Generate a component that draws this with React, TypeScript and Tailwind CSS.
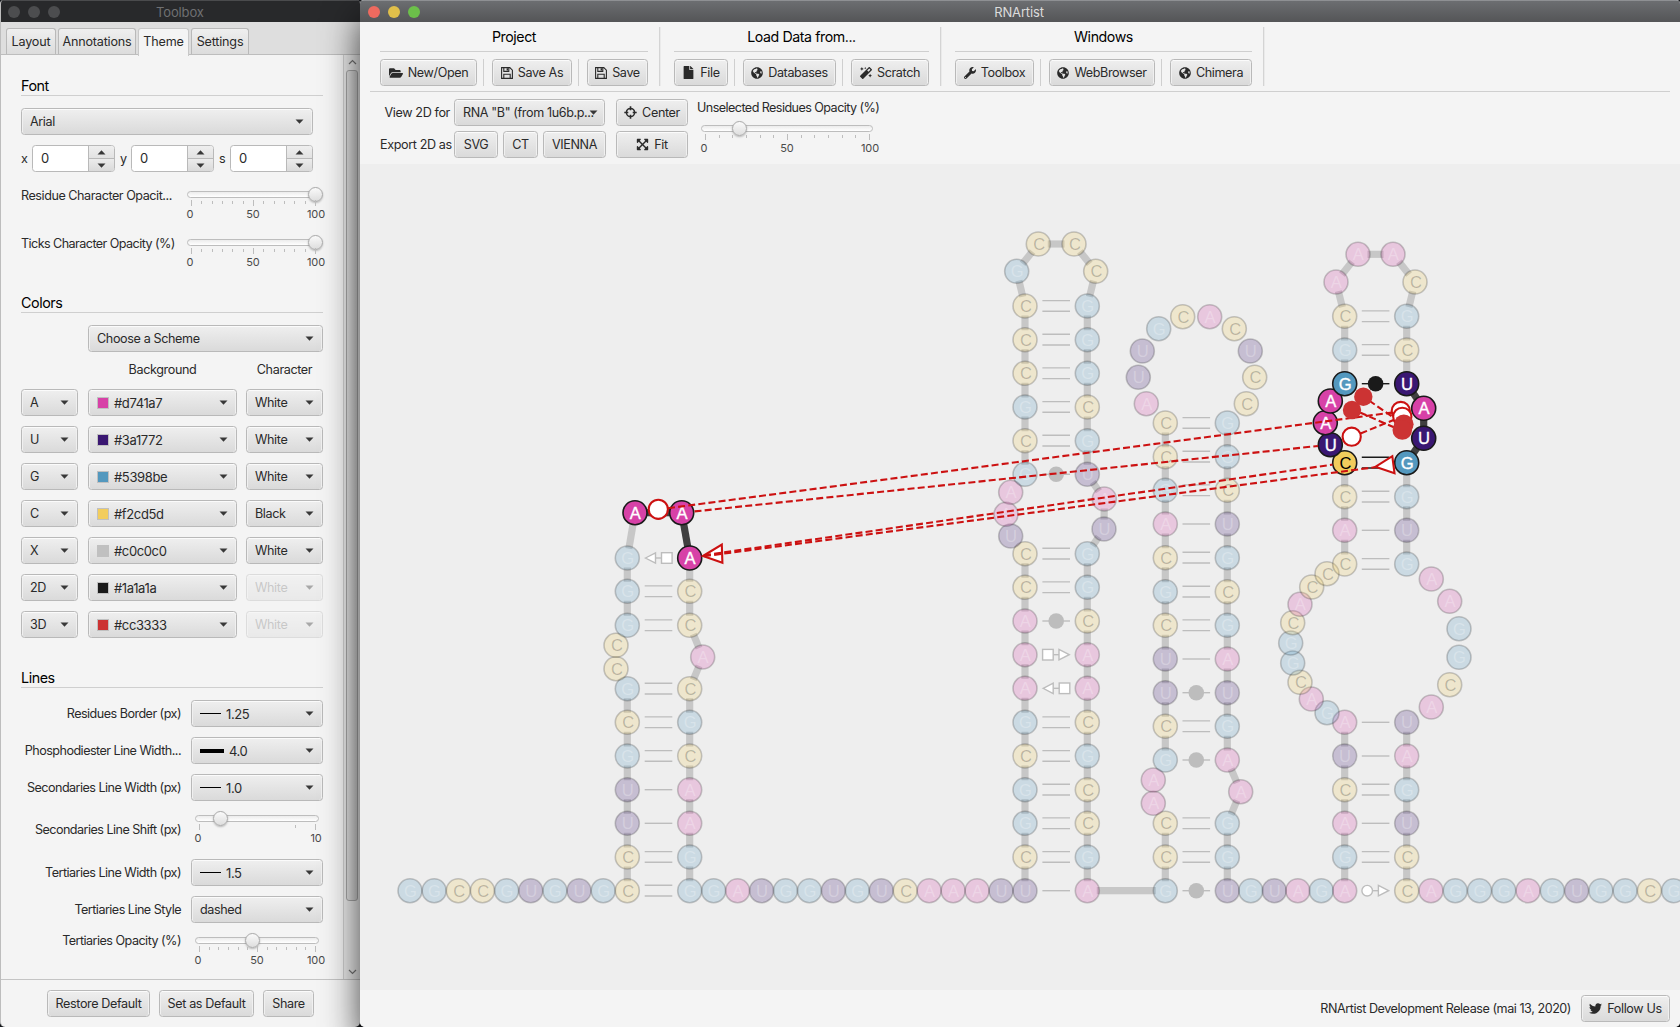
import React from "react";
import {
  FaFolderOpen,
  FaFile,
  FaGlobeAmericas,
  FaMagic,
  FaWrench,
  FaTwitter,
  FaExpandArrowsAlt,
} from "react-icons/fa";

/* ---------- shared controls ---------- */

const FACE =
  "rounded-[3.5px] border border-[#b9b9b9] bg-gradient-to-b from-[#efefef] to-[#dadada] shadow-[inset_0_1px_0_#fbfbfb,inset_1px_0_0_#f0f0f0,inset_-1px_0_0_#f0f0f0]";

function Button({ w, icon, children }: { w: number; icon?: React.ReactNode; children: React.ReactNode }) {
  return (
    <button className={`${FACE} flex h-[27px] shrink-0 items-center justify-center gap-[5px] whitespace-nowrap`} style={{ width: w }}>
      {icon}
      <span>{children}</span>
    </button>
  );
}

function Caret({ up = false }: { up?: boolean }) {
  return (
    <svg width="9" height="5" viewBox="0 0 9 5" className="shrink-0">
      <path d={up ? "M0.5 4.5 4.5 0.3 8.5 4.5z" : "M0.5 0.5h8L4.5 4.7z"} fill="#383838" />
    </svg>
  );
}

function Combo({ w, disabled = false, children }: { w: number; disabled?: boolean; children: React.ReactNode }) {
  return (
    <div
      className={`${FACE} flex h-[27px] shrink-0 items-center justify-between pr-[8px] pl-[8px] ${disabled ? "opacity-40" : ""}`}
      style={{ width: w }}
    >
      <span className={`flex items-center whitespace-nowrap ${disabled ? "opacity-50" : ""}`}>{children}</span>
      <Caret />
    </div>
  );
}

type Tick = [number, boolean];
const TICKS: Tick[] = [0, 1, 2, 3, 4, 5, 6, 7, 8, 9, 10, 11, 12].map((i) => [i / 12, i % 6 === 0]);

function Slider({ w, at, ticks, labels }: { w: number; at: number; ticks: Tick[]; labels: string[] }) {
  return (
    <div className="relative h-[30px] shrink-0" style={{ width: w }}>
      <div className="h-[7px] rounded-full border border-[#bdbdbd] bg-gradient-to-b from-[#ececec] to-white" />
      <div
        className="absolute -top-[4px] size-[15px] rounded-full border border-[#a9a9a9] bg-gradient-to-b from-[#fafafa] to-[#dedede] shadow-[0_1px_2px_rgba(0,0,0,0.25)]"
        style={{ left: at - 7.5 }}
      />
      <div className="relative mx-[4px] mt-[2px] h-[6px]">
        {ticks.map(([f, major], i) => (
          <span
            key={i}
            className={`absolute w-px bg-[#bdbdbd] ${major ? "top-0 h-[6px]" : "top-[1px] h-[3px]"}`}
            style={{ left: `${f * 100}%` }}
          />
        ))}
      </div>
      <div className="mx-[3px] mt-[1px] flex justify-between text-[11px] leading-[15px] tracking-[-0.01em] text-[#4a4a4a]">
        {labels.map((l) => (
          <span key={l} className="flex w-0 justify-center">
            {l}
          </span>
        ))}
      </div>
    </div>
  );
}

function Heading({ children }: { children: React.ReactNode }) {
  return (
    <div className="h-[19px] w-[302px] border-b border-[#cfcfcf] text-[14.3px] leading-[17px] tracking-[-0.03em] text-black">
      {children}
    </div>
  );
}

/* ---------- toolbox window ---------- */

function Spinner({ label, labelW }: { label: string; labelW: string }) {
  return (
    <div className="flex items-center">
      <span className={labelW}>{label}</span>
      <div className="flex h-[27px] w-[83px] overflow-hidden rounded-[3.5px] border border-[#b9b9b9] bg-white">
        <span className="flex-1 pl-[8px] text-[13px] leading-[25px]">0</span>
        <div className="flex w-[26px] flex-col border-l border-[#b9b9b9]">
          <div className="flex flex-1 items-center justify-center border-b border-[#b9b9b9] bg-gradient-to-b from-[#efefef] to-[#e2e2e2]">
            <Caret up />
          </div>
          <div className="flex flex-1 items-center justify-center bg-gradient-to-b from-[#ececec] to-[#dadada]">
            <Caret />
          </div>
        </div>
      </div>
    </div>
  );
}

const PALETTE = [
  { key: "A", hex: "#d741a7", char: "White" },
  { key: "U", hex: "#3a1772", char: "White" },
  { key: "G", hex: "#5398be", char: "White" },
  { key: "C", hex: "#f2cd5d", char: "Black" },
  { key: "X", hex: "#c0c0c0", char: "White" },
  { key: "2D", hex: "#1a1a1a", char: "White", off: true },
  { key: "3D", hex: "#cc3333", char: "White", off: true },
];

function LineRow({ label, children }: { label: string; children: React.ReactNode }) {
  return (
    <div className="flex items-center gap-[10px]">
      <span className="w-[160px] text-right tracking-[-0.042em] whitespace-nowrap">{label}</span>
      <Combo w={132}>{children}</Combo>
    </div>
  );
}

function Stroke({ w, h }: { w: number; h: number }) {
  return <span className="mr-[5px] inline-block bg-black" style={{ width: w, height: h }} />;
}

function Tab({ w, active = false, children }: { w: number; active?: boolean; children: React.ReactNode }) {
  return (
    <div
      className={`flex items-center justify-center rounded-t-[3px] border border-b-0 ${
        active ? "h-[28px] border-[#c8c8c8] bg-[#f4f4f4]" : "h-[26px] border-[#b9b9b9] bg-gradient-to-b from-[#efefef] to-[#dcdcdc]"
      }`}
      style={{ width: w }}
    >
      <span className={active ? "-mt-[1px] tracking-[-0.015em]" : "tracking-[-0.015em]"}>{children}</span>
    </div>
  );
}

function Toolbox() {
  return (
    <aside className="flex w-[360px] shrink-0 flex-col overflow-hidden rounded-t-[4px] rounded-b-[5px] border-l border-[#bdbdbd] bg-[#f4f4f4]">
      <div className="-ml-px flex h-[22px] shrink-0 items-center border-t border-[#4a4b4d] bg-[#28292b] pl-[8px]">
        <div className="flex gap-[8px]">
          <i className="size-[12px] rounded-full bg-[#4c4d4f]" />
          <i className="size-[12px] rounded-full bg-[#4c4d4f]" />
          <i className="size-[12px] rounded-full bg-[#4c4d4f]" />
        </div>
        <span className="ml-[96px] text-[13px] tracking-[-0.01em] text-[#6f7072]">Toolbox</span>
      </div>
      <div className="flex h-[33px] shrink-0 items-start gap-[2px] border-b border-[#bdbdbd] bg-[#dedede] pt-[6px] pl-[5px]">
        <Tab w={50}>Layout</Tab>
        <Tab w={78}>Annotations</Tab>
        <Tab w={51} active>
          Theme
        </Tab>
        <Tab w={58}>Settings</Tab>
      </div>

      <div className="flex min-h-0 flex-1">
        <div className="flex w-[342px] flex-col pt-[22px] pl-[20px]">
          <Heading>Font</Heading>
          <div className="mt-[12px]">
            <Combo w={292}>Arial</Combo>
          </div>
          <div className="mt-[10px] flex">
            <Spinner label="x" labelW="w-[11px]" />
            <Spinner label="y" labelW="w-[16px] pl-[5px]" />
            <Spinner label="s" labelW="w-[16px] pl-[5px]" />
          </div>
          <div className="mt-[19px] flex h-[48px]">
            <span className="-mt-[4px] w-[166px] leading-[18px] tracking-[-0.036em]">Residue Character Opacit...</span>
            <Slider w={132} at={128.5} ticks={TICKS} labels={["0", "50", "100"]} />
          </div>
          <div className="flex h-[48px]">
            <span className="-mt-[4px] w-[166px] leading-[18px] tracking-[-0.045em]">Ticks Character Opacity (%)</span>
            <Slider w={132} at={128.5} ticks={TICKS} labels={["0", "50", "100"]} />
          </div>

          <div className="mt-[7px]">
            <Heading>Colors</Heading>
          </div>
          <div className="mt-[12px] pl-[67px]">
            <Combo w={235}>Choose a Scheme</Combo>
          </div>
          <div className="mt-[9px] flex h-[18px] items-center pl-[67px]">
            <span className="w-[149px] text-center">Background</span>
            <span className="ml-[9px] w-[77px] text-center">Character</span>
          </div>
          <div className="mt-[10px] flex flex-col gap-[10px]">
            {PALETTE.map((p) => (
              <div key={p.key} className="flex">
                <Combo w={57}>{p.key}</Combo>
                <div className="ml-[10px]">
                  <Combo w={149}>
                    <i className="mr-[5px] size-[12px] border border-[#c0c0c0]" style={{ background: p.hex }} />
                    <span className="text-[13px]">{p.hex}</span>
                  </Combo>
                </div>
                <div className="ml-[9px]">
                  <Combo w={77} disabled={p.off}>
                    {p.char}
                  </Combo>
                </div>
              </div>
            ))}
          </div>

          <div className="mt-[31px]">
            <Heading>Lines</Heading>
          </div>
          <div className="mt-[12px] flex flex-col gap-[10px]">
            <LineRow label="Residues Border (px)">
              <Stroke w={21} h={1.25} />
              <span className="text-[13px]">1.25</span>
            </LineRow>
            <LineRow label="Phosphodiester Line Width...">
              <Stroke w={24} h={4} />
              <span className="text-[13px]">4.0</span>
            </LineRow>
            <LineRow label="Secondaries Line Width (px)">
              <Stroke w={21} h={1} />
              <span className="text-[13px]">1.0</span>
            </LineRow>
          </div>
          <div className="mt-[14px] flex h-[44px]">
            <span className="mt-[6px] w-[160px] text-right tracking-[-0.042em]">Secondaries Line Shift (px)</span>
            <div className="ml-[14px]">
              <Slider w={124} at={25.5} ticks={[[0, true], [0.83, false], [1, true]]} labels={["0", "10"]} />
            </div>
          </div>
          <div className="flex flex-col gap-[10px]">
            <LineRow label="Tertiaries Line Width (px)">
              <Stroke w={21} h={1.25} />
              <span className="text-[13px]">1.5</span>
            </LineRow>
            <LineRow label="Tertiaries Line Style">dashed</LineRow>
          </div>
          <div className="mt-[14px] flex">
            <span className="-mt-[5px] w-[160px] text-right tracking-[-0.042em]">Tertiaries Opacity (%)</span>
            <div className="ml-[14px]">
              <Slider w={124} at={57.5} ticks={TICKS} labels={["0", "50", "100"]} />
            </div>
          </div>
        </div>
        <div className="flex w-[17px] flex-col items-center border-l border-[#cfcfcf] bg-[#ececec]">
          <svg width="9" height="15" viewBox="0 0 9 15" fill="none" stroke="#777" strokeWidth="1.2">
            <path d="M1 9 4.5 5.5 8 9" />
          </svg>
          <div className="h-[831px] w-[12px] rounded-[3px] border border-[#a8a8a8] bg-gradient-to-r from-[#e4e4e4] to-[#cfcfcf]" />
          <div className="flex-1" />
          <svg width="9" height="15" viewBox="0 0 9 15" fill="none" stroke="#777" strokeWidth="1.2">
            <path d="M1 6 4.5 9.5 8 6" />
          </svg>
        </div>
      </div>

      <div className="flex h-[48px] shrink-0 gap-[9px] border-t border-[#c4c4c4] pt-[10px] pl-[46px]">
        <Button w={103}>Restore Default</Button>
        <Button w={95}>Set as Default</Button>
        <Button w={51}>Share</Button>
      </div>
    </aside>
  );
}

/* ---------- toolbar ---------- */

function Floppy() {
  return (
    <svg width="12" height="12" viewBox="0 0 12 12" fill="none" stroke="#2b2b2b" strokeWidth="1.1">
      <path d="M0.6 0.6h8.2l2.6 2.6v8.2H0.6z" />
      <path d="M2.8 11.2V7.2h6.4v4" />
      <path d="M2.8 0.8v3.6h5V0.8" />
      <path d="M5.6 1.2h1.4v2.2H5.6z" fill="#2b2b2b" stroke="none" />
    </svg>
  );
}

function Crosshair() {
  return (
    <svg width="13" height="13" viewBox="0 0 13 13" fill="none" stroke="#2b2b2b" strokeWidth="1.5">
      <circle cx="6.5" cy="6.5" r="4.1" />
      <path d="M6.5 0.3v4M6.5 8.7v4M0.3 6.5h4M8.7 6.5h4" strokeWidth="1.6" />
    </svg>
  );
}

function Sep() {
  return <i className="mr-[8px] ml-[6px] h-[27px] w-px bg-[#cfcfcf]" />;
}

function Group({ w, title, children }: { w: number; title: string; children: React.ReactNode }) {
  return (
    <div className="shrink-0" style={{ width: w }}>
      <div className="h-[25px] border-b border-[#cfcfcf] text-center text-[14.2px] leading-[20px] tracking-[-0.03em] text-black">
        {title}
      </div>
      <div className="mt-[7px] flex">{children}</div>
    </div>
  );
}

function GroupSep() {
  return <i className="mr-[13px] ml-[11px] h-[59px] w-[2px] shrink-0 border-l border-[#d4d4d4] bg-[#eaeaea]" />;
}

function Toolbar() {
  return (
    <div className="h-[142px] shrink-0 bg-[#f4f4f4]">
      <div className="mx-[10px] flex h-[70px] border-b border-[#cfcfcf] pt-[5px] pl-[10px]">
        <Group w={268} title="Project">
          <Button w={97} icon={<FaFolderOpen size={14} />}>New/Open</Button>
          <Sep />
          <Button w={80} icon={<Floppy />}>Save As</Button>
          <Sep />
          <Button w={61} icon={<Floppy />}>Save</Button>
        </Group>
        <GroupSep />
        <Group w={255} title="Load Data from...">
          <Button w={54} icon={<FaFile size={13} />}>File</Button>
          <Sep />
          <Button w={93} icon={<FaGlobeAmericas size={12} />}>Databases</Button>
          <Sep />
          <Button w={78} icon={<FaMagic size={12} />}>Scratch</Button>
        </Group>
        <GroupSep />
        <Group w={297} title="Windows">
          <Button w={79} icon={<FaWrench size={12} />}>Toolbox</Button>
          <Sep />
          <Button w={106} icon={<FaGlobeAmericas size={12} />}>WebBrowser</Button>
          <Sep />
          <Button w={82} icon={<FaGlobeAmericas size={12} />}>Chimera</Button>
        </Group>
        <GroupSep />
      </div>
      <div className="flex pt-[7px] pl-[20px]">
        <div className="flex flex-col gap-[5px]">
          <div className="flex items-center gap-[4px]">
            <span className="w-[70px] text-right whitespace-nowrap">View 2D for</span>
            <div className={`${FACE} flex h-[27px] w-[151px] items-center pl-[8px]`}>
              <span className="w-[131px] whitespace-nowrap">RNA "B" (from 1u6b.p...</span>
              <span className="-ml-[5px]">
                <Caret />
              </span>
            </div>
          </div>
          <div className="flex items-center">
            <span className="mr-[4px] w-[70px] text-right whitespace-nowrap">Export 2D as</span>
            <div className="flex gap-[5px]">
              <Button w={44}>SVG</Button>
              <Button w={35}>CT</Button>
              <Button w={63}>VIENNA</Button>
            </div>
          </div>
        </div>
        <div className="ml-[10px] flex flex-col gap-[5px]">
          <Button w={72} icon={<Crosshair />}>Center</Button>
          <Button w={72} icon={<FaExpandArrowsAlt size={13} />}>Fit</Button>
        </div>
        <div className="ml-[9px]">
          <div className="h-[18px] leading-[18px] tracking-[-0.045em] whitespace-nowrap">Unselected Residues Opacity (%)</div>
          <div className="mt-[8px] ml-[4px]">
            <Slider w={172} at={38.5} ticks={TICKS} labels={["0", "50", "100"]} />
          </div>
        </div>
      </div>
    </div>
  );
}

/* ---------- RNA secondary structure ---------- */

type Residue = { b: string; x: number; y: number; sel?: boolean };

const FILL: Record<string, string> = { A: "#d741a7", U: "#3a1772", G: "#5398be", C: "#f2cd5d" };
const FADE = 0.22;
const BASE = 890.7;

/* "G 10 20" = base, x, y; a trailing * marks a selected residue */
function parse(src: string): Residue[] {
  return src
    .trim()
    .split(/\s*;\s*/)
    .filter(Boolean)
    .map((s) => {
      const [b, x, y, sel] = s.split(" ");
      return { b, x: +x, y: +y, sel: sel === "*" };
    });
}

function column(x: number, bases: string, ys: number[]): Residue[] {
  return ys.map((y, i) => ({ b: bases[i], x, y }));
}

function row(x0: number, pitch: number, bases: string): Residue[] {
  return bases.split("").map((b, i) => ({ b, x: x0 + pitch * i, y: BASE }));
}

const up = (a: number[]) => [...a].reverse();

const CHAIN: Residue[] = [
  ...row(410, 24.15, "GGCCGUGUG"),
  ...column(627.3, "CCUUGCG", [BASE, 857, 823.3, 789.7, 756, 722.3, 688.7]),
  ...parse("C 616 668.7;C 616 645.3;G 627.3 625.3;G 627.3 591.3;G 627.3 558;A 635 512.7 *;A 681.7 512.7 *;A 689.7 558 *"),
  ...parse("C 689.7 591.3;C 689.7 625.3;A 702.7 657"),
  ...column(689.7, "CGCAAG", [688.7, 722.3, 756, 789.7, 823.3, 857]),
  ...row(689.7, 23.95, "GGAUGGUGUCAAAU"),
  ...column(1025, "UCGGCGAAACC", [BASE, 857, 823.3, 789.7, 756, 722.3, 688.3, 654.7, 621, 587.3, 553.7]),
  ...parse("U 1010.7 536;A 1006 514.3;A 1010.7 492.3"),
  ...column(1025, "GCGCCC", [474.3, 440.7, 407, 373.3, 339.7, 306]),
  ...parse("G 1016.7 271.3;C 1038.3 244;C 1074 244;C 1095.7 271.3"),
  ...column(1087.3, "GGGCGU", [306, 339.7, 373.3, 407, 440.7, 474.3]),
  ...parse("A 1104.3 499;U 1104 529"),
  ...column(1087.3, "GGCAACGCCGA", up([BASE, 857, 823.3, 789.7, 756, 722.3, 688.3, 654.7, 621, 587.3, 553.7])),
  ...column(1165.3, "GCC", [BASE, 857, 823.3]),
  ...parse("A 1153.3 803.3;A 1153.3 780"),
  ...column(1165.3, "GCUUCGCAGCC", [760, 726.3, 692.7, 659, 625.3, 591.7, 557.7, 524, 490.3, 456.7, 423]),
  ...parse(
    "A 1146.3 403.7;U 1138.3 377.3;U 1142.3 351;G 1158.7 328.7;C 1182.7 316.7;A 1209.7 316.7;C 1234.3 328.7;U 1250.3 351;C 1254.7 377.3;C 1246.3 403.7"
  ),
  ...column(1227.3, "GGCUGCGAUGA", [423, 456.7, 490.3, 524, 557.7, 591.7, 625.3, 659, 692.7, 726.3, 760]),
  ...parse("A 1240.7 791.7;G 1227.3 823.3;G 1227.3 857"),
  ...row(1227.3, 23.5, "UGUAG"),
  ...column(1344.7, "AGACUA", [BASE, 857, 823.3, 789.7, 756, 722.3]),
  ...parse(
    "G 1327 712.7;A 1311.3 699;C 1300 682.3;G 1292.7 663;G 1290.7 643;C 1292.7 622.7;A 1300 604.3;C 1311.7 587;C 1327 573.7;C 1344.7 564;A 1344.7 530.3;C 1344.7 496.7"
  ),
  ...parse("C 1344.7 462.7 *;U 1330.3 444.7 *;A 1325.3 422.7 *;A 1330.3 401 *;G 1344.7 383.7 *"),
  ...parse("G 1344.7 350;C 1344.7 316.3;A 1336 282;A 1358 254.3;A 1393 254.3;C 1415 282;G 1406.7 316.3;C 1406.7 350"),
  ...parse("U 1406.7 383.7 *;A 1423.7 408.3 *;U 1423.7 438.3 *;G 1406.7 462.7 *"),
  ...parse(
    "G 1406.7 496.7;U 1406.7 530.3;G 1406.7 564;A 1431.3 579;A 1449.7 601.3;G 1459 628.7;G 1459 657.3;C 1449.7 684.7;A 1431.3 707"
  ),
  ...column(1406.7, "UAGUC", [722.3, 756, 789.7, 823.3, 857]),
  ...row(1406.7, 24.27, "CAGGGAGUGGCG"),
];

/* centre x of each helix with its pairs: = double, - single, o dot, and the non-canonical symbols */
const PAIRS: { x: number; list: [number, string][] }[] = [
  {
    x: 658.5,
    list: [[558, "<s"], [591.3, "="], [625.3, "="], [688.7, "="], [722.3, "="], [756, "="], [789.7, "-"], [823.3, "-"], [857, "="], [BASE, "="]],
  },
  {
    x: 1056.2,
    list: [
      [306, "="], [339.7, "="], [373.3, "="], [407, "="], [440.7, "="], [474.3, "o"], [553.7, "="], [587.3, "="], [621, "o"],
      [654.7, "s>"], [688.3, "<s"], [722.3, "="], [756, "="], [789.7, "="], [823.3, "="], [857, "="], [BASE, "-"],
    ],
  },
  {
    x: 1196.3,
    list: [
      [423, "="], [456.7, "="], [490.3, "="], [524, "-"], [557.7, "="], [591.7, "="], [625.3, "="], [659, "-"], [692.7, "o"],
      [726.3, "="], [760, "o"], [823.3, "="], [857, "="], [BASE, "o"],
    ],
  },
  {
    x: 1375.6,
    list: [
      [316.3, "="], [350, "="], [383.7, "O"], [462.7, "#"], [496.7, "="], [530.3, "-"], [564, "="], [722.3, "-"], [756, "-"],
      [789.7, "="], [823.3, "-"], [857, "="], [BASE, "c>"],
    ],
  },
];

function Pair({ x, y, kind }: { x: number; y: number; kind: string }) {
  const dark = kind === "O" || kind === "#";
  const col = dark ? "#1a1a1a" : "#bdbdbd";
  const l = x - 13.8;
  const r = x + 13.8;
  if (kind === "=" || kind === "#")
    return <path d={`M${l} ${y - 5.4}H${r}M${l} ${y + 5.3}H${r}`} stroke={col} strokeWidth="1.4" />;
  if (kind === "-") return <path d={`M${l} ${y}H${r}`} stroke={col} strokeWidth="1.4" />;
  if (kind.toLowerCase() === "o")
    return (
      <g>
        <path d={`M${l} ${y}H${r}`} stroke={col} strokeWidth="1.4" />
        <circle cx={x} cy={y} r="7.8" fill={col} />
      </g>
    );
  return (
    <g fill="#fff" stroke={col} strokeWidth="1.4">
      <path d={`M${x - 3} ${y}h6`} />
      {kind === "<s" && <path d={`M${l + 0.8} ${y}L${x - 3} ${y - 5.2}V${y + 5.2}z`} />}
      {kind === "<s" && <rect x={x + 3} y={y - 5.3} width="10.6" height="10.6" />}
      {kind !== "<s" && <path d={`M${r - 0.8} ${y}L${x + 2.8} ${y - 5.2}V${y + 5.2}z`} />}
      {kind === "s>" && <rect x={x - 13.6} y={y - 5.3} width="10.6" height="10.6" />}
      {kind === "c>" && <circle cx={x - 8.4} cy={y} r="5.3" />}
    </g>
  );
}

function Backbone() {
  return (
    <g strokeWidth="7.2">
      {CHAIN.slice(1).map((n, i) => {
        const p = CHAIN[i];
        const dx = n.x - p.x;
        const dy = n.y - p.y;
        const d = Math.hypot(dx, dy);
        if (d < 29.5) return null;
        const ux = (dx / d) * 9.5;
        const uy = (dy / d) * 9.5;
        return (
          <line
            key={i}
            x1={p.x + ux}
            y1={p.y + uy}
            x2={n.x - ux}
            y2={n.y - uy}
            stroke="#404040"
            strokeOpacity={p.sel && n.sel ? 1 : FADE}
          />
        );
      })}
    </g>
  );
}

function Residues() {
  return (
    <g className="[font-family:'Liberation_Sans',Arial,sans-serif]" fontSize="16.6" textAnchor="middle">
      {CHAIN.map((n, i) => {
        const o = n.sel ? 1 : FADE;
        const ink = n.b === "C" ? "#000" : "#fff";
        return (
          <g key={i}>
            <circle cx={n.x} cy={n.y} r="12" fill={FILL[n.b]} fillOpacity={o} stroke="#1a1a1a" strokeWidth="1.6" strokeOpacity={o} />
            <text
              x={n.x + (n.b === "C" ? 0.7 : 0.2)}
              y={n.y + 5.8}
              fill={ink}
              fillOpacity={n.b === "C" ? o : Math.min(1, o + 0.04)}
              stroke={n.sel && n.b !== "C" ? ink : "none"}
              strokeWidth="0.35"
            >
              {n.b}
            </text>
          </g>
        );
      })}
    </g>
  );
}

function Tertiaries() {
  return (
    <g stroke="#cc1111" strokeWidth="2.1" fill="none">
      <g fill="#fff">
        <path d="M703 556 721.8 544.5 722.4 562.8z" />
        <path d="M1375.3 466.8 1392.3 456.2 1394.5 473.2z" />
        <circle cx="658.3" cy="509.3" r="9.6" />
        <circle cx="1351.7" cy="436.7" r="9.1" />
        <circle cx="1400.8" cy="411" r="9.1" />
      </g>
      <g strokeDasharray="7 3.2">
        <path d="M668 508.2 1392 412.6" />
        <path d="M694.5 511.4 1318 446" />
        <path d="M704 555.2 1332.5 464.6" />
        <path d="M704 556.2 1375 467.2" />
        <path d="M1369 400.5 1400 422" />
        <path d="M1360 412.5 1400 430" />
        <path d="M1360.5 433.5 1396 419" />
      </g>
      <circle cx="1402.3" cy="416.8" r="9.1" fill="#fff" />
      <g fill="#cc3333" stroke="none">
        <circle cx="1363.3" cy="396.7" r="9.2" />
        <circle cx="1352" cy="410" r="9.2" />
        <circle cx="1403.8" cy="424.3" r="9.8" />
        <circle cx="1402.3" cy="430" r="9.8" />
      </g>
    </g>
  );
}

function Structure() {
  return (
    <svg width="1320" height="826" viewBox="360 164 1320 826" className="block shrink-0">
      {PAIRS.map((h) => h.list.map(([y, kind]) => <Pair key={`${h.x}-${y}`} x={h.x} y={y} kind={kind} />))}
      <Backbone />
      <Residues />
      <Tertiaries />
    </svg>
  );
}

/* ---------- app ---------- */

export default function App() {
  return (
    <div className="flex h-[1027px] w-[1680px] overflow-hidden bg-[#15181c] font-['Inter',sans-serif] text-[12.6px] leading-[18px] tracking-[-0.03em] text-[#2a2a2a]">
      <Toolbox />
      <main className="relative z-10 flex min-w-0 flex-1 flex-col overflow-hidden rounded-t-[4px] rounded-b-[5px] bg-[#eeeeee] shadow-[0_18px_36px_rgba(0,0,0,0.75)]">
        <div className="flex h-[22px] shrink-0 items-center border-t border-[#8e9093] bg-gradient-to-b from-[#6c6e71] to-[#545557] pl-[8px]">
          <div className="flex gap-[8px]">
            <i className="size-[12px] rounded-full bg-[#ee6a5f]" />
            <i className="size-[12px] rounded-full bg-[#e0bf4a]" />
            <i className="size-[12px] rounded-full bg-[#6cc04a]" />
          </div>
          <div className="flex-1 pr-[62px] text-center text-[13px] tracking-[-0.01em] text-[#dcdcdc]">RNArtist</div>
        </div>
        <Toolbar />
        <Structure />
        <footer className="flex h-[37px] shrink-0 items-center justify-end gap-[10px] bg-[#f4f4f4] pr-[10px]">
          <span className="tracking-[-0.036em]">RNArtist Development Release (mai 13, 2020)</span>
          <Button w={89} icon={<FaTwitter size={13} />}>Follow Us</Button>
        </footer>
      </main>
    </div>
  );
}
